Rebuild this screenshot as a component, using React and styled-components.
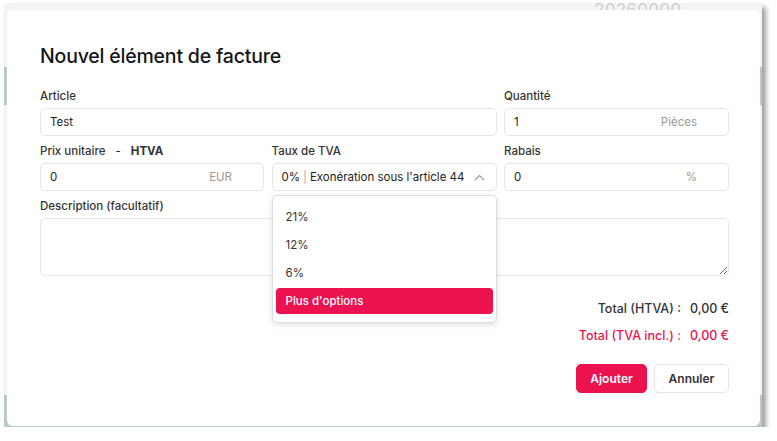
import styled, { createGlobalStyle } from "styled-components";

const PINK = "#ec1250";

const GlobalStyle = createGlobalStyle`
  body {
    margin: 0;
    background: #fff;
    font-family: Inter, "Noto Sans", sans-serif;
  }
`;

// Screenshot frame: the page behind the dialog
const Frame = styled.div`
  position: relative;
  margin: 3px 0 0 4px;
  width: 758px;
  height: 424px;
  overflow: hidden;
  background: linear-gradient(
    to bottom,
    #f4f4f4 0 64px,
    #b9cbc9 64px 102px,
    #f4f4f4 102px 392px,
    #b9cbc9 392px
  );
  box-shadow: 4px 4px 5px rgba(0, 0, 0, 0.38);
`;

const PageNumber = styled.div`
  padding-left: 590px;
  margin-top: -3px;
  font-size: 17px;
  line-height: 20px;
  color: #cfcfcf;
  letter-spacing: 0.3px;
`;

const Modal = styled.div`
  position: absolute;
  left: 3px;
  top: 7px;
  width: 753px;
  height: 416px;
  box-sizing: border-box;
  padding: 33px 31px 0 33px;
  background: #fff;
  border-radius: 6px;
`;

const Title = styled.h2`
  margin: 0 0 21px;
  padding-top: 1px;
  font-size: 19.5px;
  font-weight: 500;
  line-height: 24px;
  color: #151515;
  letter-spacing: -0.2px;
`;

const Grid = styled.div`
  display: grid;
  grid-template-columns: 224px 225px 225px;
  column-gap: 7.5px;
  row-gap: 8px;
`;

const Field = styled.div`
  display: flex;
  flex-direction: column;
  grid-column: span ${(p) => p.$span || 1};
`;

const Label = styled.label`
  font-size: 11.5px;
  font-weight: 500;
  line-height: 14px;
  margin-bottom: 5px;
  color: #333;
  b {
    font-weight: 700;
    margin-left: 10px;
  }
  i {
    font-style: normal;
    margin-left: 10px;
  }
`;

const Box = styled.div`
  position: relative;
  height: 28px;
  box-sizing: border-box;
  border: 1px solid #e5e5e5;
  border-radius: 5px;
  display: flex;
  align-items: center;
  justify-content: space-between;
  padding: 0 ${(p) => p.$right || 31}px 0 9px;
  font-size: 11.5px;
  color: #222;
`;

const Unit = styled.span`
  color: #9a9a9a;
`;

const Sep = styled.span`
  color: #aaa;
  margin: 0 3px;
`;

const Chevron = () => (
  <svg width="11" height="7" viewBox="0 0 11 7" fill="none">
    <path d="M1 6 L5.5 1.5 L10 6" stroke="#9a9a9a" strokeWidth="1.2" />
  </svg>
);

const Dropdown = styled.div`
  position: absolute;
  top: 31px;
  left: -1px;
  right: -1px;
  z-index: 2;
  background: #fff;
  border: 1px solid #dcdcdc;
  border-radius: 5px;
  box-shadow: 0 2px 6px rgba(0, 0, 0, 0.12);
  padding: 7px 3px 8px;
`;

const Option = styled.div`
  height: ${(p) => (p.$active ? 26 : 28)}px;
  margin-top: ${(p) => (p.$active ? 1 : 0)}px;
  display: flex;
  align-items: center;
  padding-left: 10px;
  border-radius: 4px;
  font-size: 11.5px;
  color: ${(p) => (p.$active ? "#fff" : "#333")};
  background: ${(p) => (p.$active ? PINK : "transparent")};
  font-weight: ${(p) => (p.$active ? 500 : 400)};
`;

const TextArea = styled.textarea`
  height: 58px;
  box-sizing: border-box;
  width: 100%;
  border: 1px solid #e5e5e5;
  border-radius: 5px;
  resize: vertical;
  font-family: inherit;
  outline: none;
`;

const Totals = styled.div`
  margin-top: 25px;
  display: flex;
  flex-direction: column;
  align-items: flex-end;
  gap: 11px;
`;

const TotalLine = styled.div`
  display: flex;
  gap: 9px;
  font-size: 12.5px;
  font-weight: 500;
  line-height: 16px;
  color: ${(p) => p.$color};
`;

const Actions = styled.div`
  margin-top: 20px;
  display: flex;
  justify-content: flex-end;
  gap: 7px;
`;

const Button = styled.button`
  height: 29px;
  width: ${(p) => p.$w}px;
  border-radius: 5px;
  font-family: inherit;
  font-size: 12px;
  font-weight: 600;
  border: 1px solid ${(p) => (p.$primary ? PINK : "#e5e5e5")};
  background: ${(p) => (p.$primary ? PINK : "#fff")};
  color: ${(p) => (p.$primary ? "#fff" : "#333")};
`;

export default function App() {
  return (
    <>
      <GlobalStyle />
      <Frame>
        <PageNumber>20260000</PageNumber>
        <Modal>
          <Title>Nouvel élément de facture</Title>
          <Grid>
            <Field $span={2}>
              <Label>Article</Label>
              <Box>Test</Box>
            </Field>
            <Field>
              <Label>Quantité</Label>
              <Box>
                1<Unit>Pièces</Unit>
              </Box>
            </Field>
            <Field>
              <Label>
                Prix unitaire<i>-</i>
                <b>HTVA</b>
              </Label>
              <Box>
                0<Unit>EUR</Unit>
              </Box>
            </Field>
            <Field>
              <Label>Taux de TVA</Label>
              <Box $right={11}>
                <span>
                  0%<Sep>|</Sep>Exonération sous l'article 44
                </span>
                <Chevron />
                <Dropdown>
                  <Option>21%</Option>
                  <Option>12%</Option>
                  <Option>6%</Option>
                  <Option $active>Plus d'options</Option>
                </Dropdown>
              </Box>
            </Field>
            <Field>
              <Label>Rabais</Label>
              <Box>
                0<Unit>%</Unit>
              </Box>
            </Field>
            <Field $span={3}>
              <Label>Description (facultatif)</Label>
              <TextArea />
            </Field>
          </Grid>
          <Totals>
            <TotalLine $color="#333">
              <span>Total (HTVA) :</span>
              <span>0,00 €</span>
            </TotalLine>
            <TotalLine $color={PINK}>
              <span>Total (TVA incl.) :</span>
              <span>0,00 €</span>
            </TotalLine>
          </Totals>
          <Actions>
            <Button $primary $w={71}>Ajouter</Button>
            <Button $w={75}>Annuler</Button>
          </Actions>
        </Modal>
      </Frame>
    </>
  );
}
